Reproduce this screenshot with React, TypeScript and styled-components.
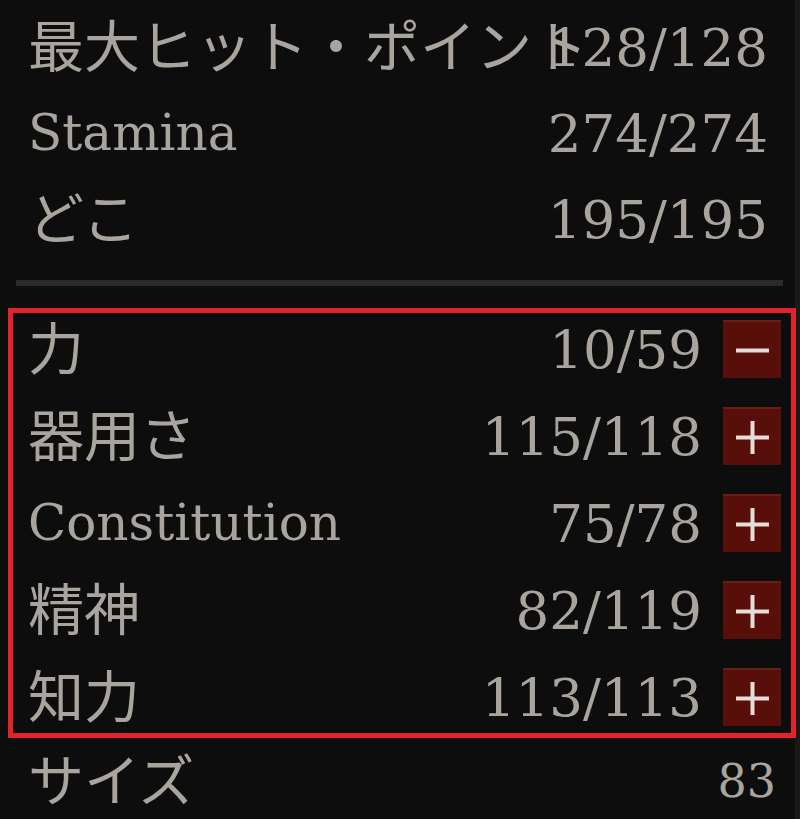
import { createGlobalStyle, styled } from "styled-components"

const GlobalStyle = createGlobalStyle`
  html, body {
    margin: 0;
    padding: 0;
    background: #0d0d0e;
  }
`

const Panel = styled.main`
  width: 800px;
  height: 819px;
  box-sizing: border-box;
  padding-top: 11px;
  display: flex;
  flex-direction: column;
  overflow: hidden;
  background: #0d0d0e;
  box-shadow: inset -5px 0 0 #19191a;
  color: #a9a49d;
`

const Vitals = styled.section`
  display: flex;
  flex-direction: column;
  gap: 14px;
  padding: 0 32px 0 28px;
`

const Row = styled.div`
  height: 72px;
  display: flex;
  align-items: center;
`

// CJK labels sit a little higher than the serif numbers in the game font
const Label = styled.span<{ $latin?: boolean }>`
  flex: 1 1 0;
  min-width: 0;
  white-space: nowrap;
  font-family: ${({ $latin }) =>
    $latin ? `"DejaVu Serif", serif` : `"Noto Sans CJK JP", sans-serif`};
  font-size: ${({ $latin }) => ($latin ? "50px" : "56px")};
  line-height: 1;
  padding-bottom: ${({ $latin }) => ($latin ? "0" : "9px")};
`

const Value = styled.span<{ $small?: boolean }>`
  flex: none;
  position: relative;
  font-family: "DejaVu Serif", serif;
  font-size: ${({ $small }) => ($small ? "46px" : "53px")};
  line-height: 1;
`

const Divider = styled.hr`
  height: 6px;
  margin: 25px 17px 22px 16px;
  border: 0;
  background: #2a2a2b;
`

const AttributeBox = styled.section`
  margin: 0 4px 0 8px;
  padding: 0 10px 0 15px;
  border: 5px solid #e3222b;
  display: flex;
  flex-direction: column;
  gap: 15px;
`

const StepButton = styled.button`
  flex: none;
  width: 58px;
  height: 58px;
  margin-left: 21px;
  padding: 0;
  box-sizing: border-box;
  border: 0;
  border-top: 2px solid #6a1d15;
  background: #580f0a;
  display: grid;
  place-items: center;
  cursor: pointer;
`

const Footer = styled.section`
  margin-top: 7px;
  padding: 0 24px 0 28px;
`

function Sign({ plus }: { plus: boolean }) {
  return (
    <svg width="33" height="33" viewBox="0 0 33 33">
      <rect x="0" y="14.5" width="33" height="4" fill="#e7ddd6" />
      {plus && <rect x="14.5" y="0" width="4" height="33" fill="#e7ddd6" />}
    </svg>
  )
}

const vitals = [
  { label: "最大ヒット・ポイント", value: "128/128" },
  { label: "Stamina", value: "274/274", latin: true },
  { label: "どこ", value: "195/195" },
]

const attributes = [
  { label: "力", value: "10/59", plus: false },
  { label: "器用さ", value: "115/118", plus: true },
  { label: "Constitution", value: "75/78", plus: true, latin: true },
  { label: "精神", value: "82/119", plus: true },
  { label: "知力", value: "113/113", plus: true },
]

export default function App() {
  return (
    <>
      <GlobalStyle />
      <Panel>
        <Vitals>
          {vitals.map((v) => (
            <Row key={v.label}>
              <Label $latin={v.latin}>{v.label}</Label>
              <Value>{v.value}</Value>
            </Row>
          ))}
        </Vitals>

        <Divider />

        <AttributeBox>
          {attributes.map((a) => (
            <Row key={a.label}>
              <Label $latin={a.latin}>{a.label}</Label>
              <Value>{a.value}</Value>
              <StepButton aria-label={a.plus ? "increase" : "decrease"}>
                <Sign plus={a.plus} />
              </StepButton>
            </Row>
          ))}
        </AttributeBox>

        <Footer>
          <Row>
            <Label>サイズ</Label>
            <Value $small>83</Value>
          </Row>
        </Footer>
      </Panel>
    </>
  )
}
